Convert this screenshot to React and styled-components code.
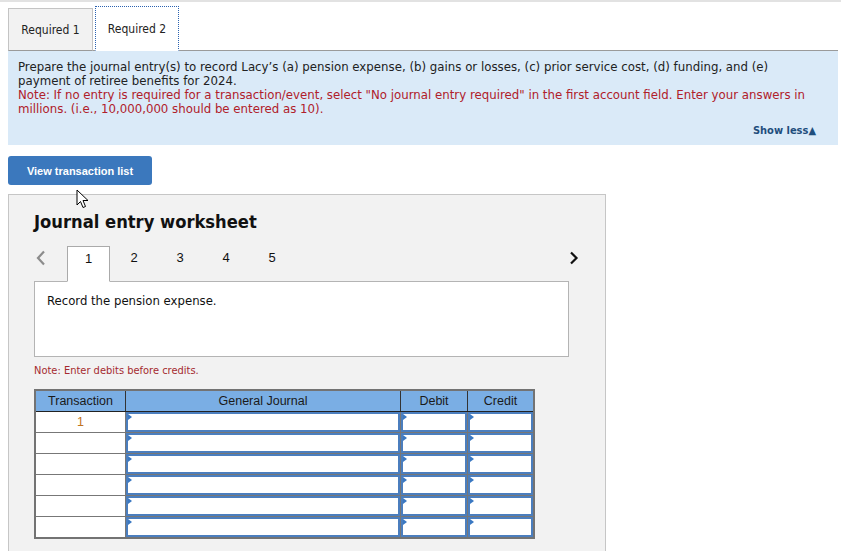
import React from "react";
import styled, { createGlobalStyle } from "styled-components";

const Global = createGlobalStyle`
  html, body { margin: 0; padding: 0; background: #fff; }
  body { font-family: "DejaVu Sans Condensed", "DejaVu Sans", sans-serif; color: #222; }
`;

const Page = styled.div`
  width: 841px;
  height: 551px;
  overflow: hidden;
  position: relative;
  border-top: 2px solid #e2e2e2;
  box-sizing: border-box;
  padding-left: 8px;
`;

const TabBar = styled.div`
  display: flex;
  align-items: flex-end;
  margin-top: 4px;
  width: 830px;
  border-bottom: 1px solid #9a9a9a;
  gap: 2px;
`;

const Tab = styled.div`
  height: 43px;
  box-sizing: border-box;
  display: flex;
  align-items: center;
  justify-content: center;
  font-size: 12px;
  color: #222;
  margin-bottom: -1px;
  ${(p) =>
    p.$active
      ? `width: 84px; background: #fff; border: 1px dotted #2b62b0; border-bottom: 1px solid #fff; height: 45px;`
      : `width: 85px; background: #f2f2f2; border: 1px solid #c4c4c4; border-bottom: 1px solid #9a9a9a;`}
`;

const InfoPanel = styled.div`
  width: 830px;
  box-sizing: border-box;
  background: #daeaf8;
  padding: 9px 22px 7px 10px;
  font-size: 13.1px;
  line-height: 14px;
  color: #222;
`;

const Para = styled.p`
  margin: 0;
  color: ${(p) => (p.$note ? "#b0202a" : "#222")};
`;

const ShowLess = styled.div`
  text-align: right;
  margin-top: 8px;
  font-weight: bold;
  font-size: 11px;
  color: #1f4e7d;
`;

const Button = styled.button`
  margin-top: 11px;
  width: 144px;
  height: 29px;
  border: none;
  border-radius: 3px;
  background: #3b78bd;
  color: #fff;
  font-family: "Liberation Sans", Arial, sans-serif;
  font-weight: bold;
  font-size: 11px;
  display: block;
  padding: 0;
`;

const Cursor = styled.svg`
  position: absolute;
  left: 76px;
  top: 187px;
`;

const Worksheet = styled.div`
  margin-top: 9px;
  width: 598px;
  height: 400px;
  box-sizing: border-box;
  background: #f2f2f2;
  border: 1px solid #c6c6c6;
  padding: 15px 0 0 25px;
`;

const Title = styled.h2`
  margin: 0;
  font-family: "DejaVu Sans Condensed", "DejaVu Sans", sans-serif;
  font-weight: bold;
  font-size: 18.2px;
  line-height: 24px;
  color: #111;
`;

const Nav = styled.div`
  display: flex;
  align-items: flex-end;
  margin-top: 11px;
  width: 545px;
  height: 36px;
`;

const Chevron = styled.div`
  width: 33px;
  height: 36px;
  box-sizing: border-box;
  display: flex;
  align-items: flex-start;
  padding-top: 5px;
  justify-content: ${(p) => (p.$right ? "flex-end" : "flex-start")};
  ${(p) => (p.$right ? "margin-left: auto;" : "padding-left: 2px;")}
`;

const Steps = styled.div`
  display: flex;
  gap: 2px;
`;

const Step = styled.div`
  width: 43px;
  height: 36px;
  box-sizing: border-box;
  display: flex;
  align-items: flex-start;
  padding-top: 4px;
  justify-content: center;
  font-family: "Liberation Sans", Arial, sans-serif;
  font-size: 13px;
  color: #111;
  margin-bottom: -1px;
  ${(p) =>
    p.$active
      ? "background: #fff; border: 1px solid #aaa; border-bottom: 1px solid #fff; position: relative; z-index: 1;"
      : "width: 44px;"}
`;

const RecordBox = styled.div`
  width: 535px;
  height: 76px;
  box-sizing: border-box;
  background: #fff;
  border: 1px solid #b4b4b4;
  padding: 11px 12px;
  font-size: 13px;
  color: #111;
`;

const SmallNote = styled.div`
  margin-top: 7px;
  font-size: 11px;
  color: #a52a2f;
`;

const Table = styled.table`
  margin-top: 12px;
  border-collapse: collapse;
  border: 2px solid #737373;
  font-family: "Liberation Sans", Arial, sans-serif;
  font-size: 12.5px;
`;

const Th = styled.th`
  background: #7aaee4;
  font-weight: normal;
  color: #1a1a1a;
  height: 20px;
  padding: 0;
  border: 1px solid #333;
  border-bottom: 1px solid #222;
  width: ${(p) => p.$w}px;
`;

const TdNum = styled.td`
  background: #fff;
  border: 1px solid #777;
  height: 20px;
  padding: 0;
  text-align: center;
  color: #bf7420;
  vertical-align: top;
  line-height: 20px;
`;

const TdInput = styled.td`
  border: 1px solid #777;
  padding: 0;
  height: 20px;
`;

const Field = styled.div`
  position: relative;
  height: 20px;
  box-sizing: border-box;
  border: 2px solid #4b7ebe;
  background: #fff;
  &::before {
    content: "";
    position: absolute;
    left: 0;
    top: 0;
    border-top: 3px solid transparent;
    border-bottom: 3px solid transparent;
    border-left: 4px solid #3a78c2;
  }
`;

const rows = [1, 2, 3, 4, 5, 6];

export default function App() {
  return (
    <>
      <Global />
      <Page>
        <TabBar>
          <Tab>Required 1</Tab>
          <Tab $active>Required 2</Tab>
        </TabBar>
        <InfoPanel>
          <Para>
            Prepare the journal entry(s) to record Lacy’s (a) pension expense, (b) gains or losses, (c) prior service cost, (d) funding, and (e) payment of retiree benefits for 2024.
          </Para>
          <Para $note>
            Note: If no entry is required for a transaction/event, select "No journal entry required" in the first account field. Enter your answers in millions. (i.e., 10,000,000 should be entered as 10).
          </Para>
          <ShowLess>Show less▲</ShowLess>
        </InfoPanel>
        <Button>View transaction list</Button>
        <Cursor width="14" height="20" viewBox="0 0 14 20">
          <path d="M1 1 L1 16 L4.5 12.5 L7 18.5 L9.5 17.5 L7 11.5 L12 11.5 Z" fill="#fff" stroke="#000" strokeWidth="1" strokeLinejoin="round" />
        </Cursor>
        <Worksheet>
          <Title>Journal entry worksheet</Title>
          <Nav>
            <Chevron>
              <svg width="10" height="16" viewBox="0 0 10 16">
                <path d="M8 1.5 L2 8 L8 14.5" fill="none" stroke="#8c8c8c" strokeWidth="2.2" />
              </svg>
            </Chevron>
            <Steps>
              <Step $active>1</Step>
              <Step>2</Step>
              <Step>3</Step>
              <Step>4</Step>
              <Step>5</Step>
            </Steps>
            <Chevron $right>
              <svg width="10" height="16" viewBox="0 0 10 16">
                <path d="M2 2.5 L7.5 8 L2 13.5" fill="none" stroke="#111" strokeWidth="2.2" />
              </svg>
            </Chevron>
          </Nav>
          <RecordBox>Record the pension expense.</RecordBox>
          <SmallNote>Note: Enter debits before credits.</SmallNote>
          <Table>
            <thead>
              <tr>
                <Th $w={89}>Transaction</Th>
                <Th $w={274}>General Journal</Th>
                <Th $w={66}>Debit</Th>
                <Th $w={65}>Credit</Th>
              </tr>
            </thead>
            <tbody>
              {rows.map((r) => (
                <tr key={r}>
                  <TdNum>{r === 1 ? "1" : ""}</TdNum>
                  <TdInput><Field /></TdInput>
                  <TdInput><Field /></TdInput>
                  <TdInput><Field /></TdInput>
                </tr>
              ))}
            </tbody>
          </Table>
        </Worksheet>
      </Page>
    </>
  );
}
